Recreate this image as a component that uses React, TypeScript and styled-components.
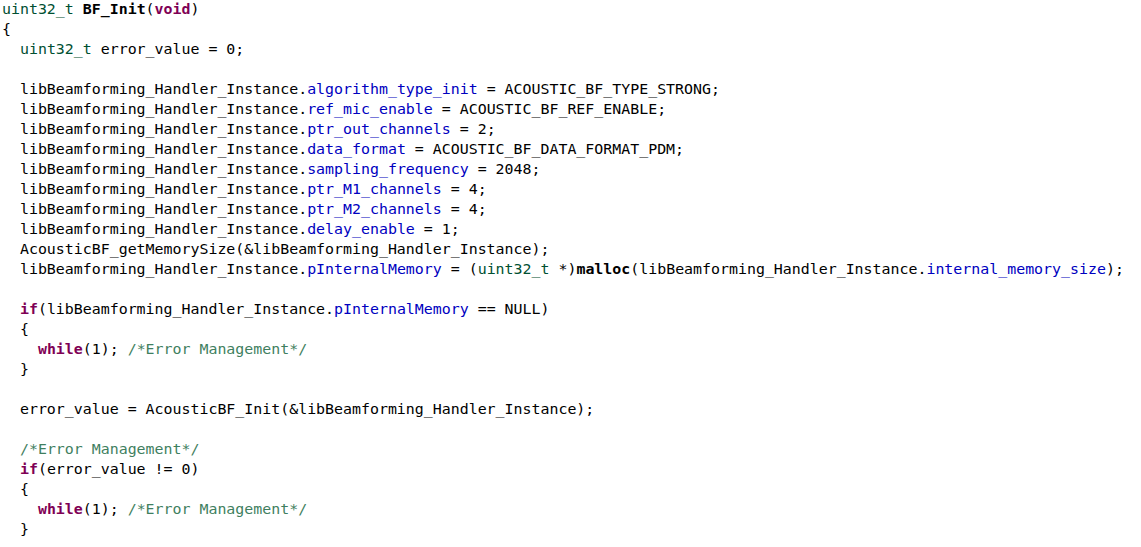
import React from "react";
import styled, { createGlobalStyle } from "styled-components";

const Global = createGlobalStyle`
  html, body { margin: 0; padding: 0; background: #ffffff; }
  body { overflow: hidden; }
`;

type Kind = "plain" | "type" | "kw" | "field" | "comment" | "fn";

const Editor = styled.div`
  width: 1141px;
  height: 548px;
  margin-top: -1px;
  background: #ffffff;
  padding: 0 0 0 2px;
  box-sizing: border-box;
  display: flex;
  flex-direction: column;
  font-family: "DejaVu Sans Mono", "Liberation Mono", monospace;
  font-size: 14.92px;
  color: #000000;
  overflow: hidden;
`;

const Line = styled.div`
  height: 20px;
  line-height: 20px;
  white-space: pre;
  flex: none;
`;

const colors: Record<Kind, string> = {
  plain: "#000000",
  type: "#005032",
  kw: "#7f0055",
  field: "#0000c0",
  comment: "#3f7f5f",
  fn: "#000000",
};

const Tok = styled.span<{ $k: Kind }>`
  color: ${(p) => colors[p.$k]};
  font-weight: ${(p) => (p.$k === "kw" || p.$k === "fn" ? "bold" : "normal")};
`;

type Seg = [Kind, string];

const I = "libBeamforming_Handler_Instance";

const code: Seg[][] = [
  [["type", "uint32_t"], ["plain", " "], ["fn", "BF_Init"], ["plain", "("], ["kw", "void"], ["plain", ")"]],
  [["plain", "{"]],
  [["plain", "  "], ["type", "uint32_t"], ["plain", " error_value = 0;"]],
  [],
  [["plain", `  ${I}.`], ["field", "algorithm_type_init"], ["plain", " = ACOUSTIC_BF_TYPE_STRONG;"]],
  [["plain", `  ${I}.`], ["field", "ref_mic_enable"], ["plain", " = ACOUSTIC_BF_REF_ENABLE;"]],
  [["plain", `  ${I}.`], ["field", "ptr_out_channels"], ["plain", " = 2;"]],
  [["plain", `  ${I}.`], ["field", "data_format"], ["plain", " = ACOUSTIC_BF_DATA_FORMAT_PDM;"]],
  [["plain", `  ${I}.`], ["field", "sampling_frequency"], ["plain", " = 2048;"]],
  [["plain", `  ${I}.`], ["field", "ptr_M1_channels"], ["plain", " = 4;"]],
  [["plain", `  ${I}.`], ["field", "ptr_M2_channels"], ["plain", " = 4;"]],
  [["plain", `  ${I}.`], ["field", "delay_enable"], ["plain", " = 1;"]],
  [["plain", `  AcousticBF_getMemorySize(&${I});`]],
  [
    ["plain", `  ${I}.`],
    ["field", "pInternalMemory"],
    ["plain", " = ("],
    ["type", "uint32_t"],
    ["plain", " *)"],
    ["fn", "malloc"],
    ["plain", `(${I}.`],
    ["field", "internal_memory_size"],
    ["plain", ");"],
  ],
  [],
  [["plain", "  "], ["kw", "if"], ["plain", `(${I}.`], ["field", "pInternalMemory"], ["plain", " == NULL)"]],
  [["plain", "  {"]],
  [["plain", "    "], ["kw", "while"], ["plain", "(1); "], ["comment", "/*Error Management*/"]],
  [["plain", "  }"]],
  [],
  [["plain", `  error_value = AcousticBF_Init(&${I});`]],
  [],
  [["plain", "  "], ["comment", "/*Error Management*/"]],
  [["plain", "  "], ["kw", "if"], ["plain", "(error_value != 0)"]],
  [["plain", "  {"]],
  [["plain", "    "], ["kw", "while"], ["plain", "(1); "], ["comment", "/*Error Management*/"]],
  [["plain", "  }"]],
];

export default function App() {
  return (
    <>
      <Global />
      <Editor>
        {code.map((line, i) => (
          <Line key={i}>
            {line.length === 0
              ? " "
              : line.map(([k, t], j) => (
                  <Tok key={j} $k={k}>
                    {t}
                  </Tok>
                ))}
          </Line>
        ))}
      </Editor>
    </>
  );
}
